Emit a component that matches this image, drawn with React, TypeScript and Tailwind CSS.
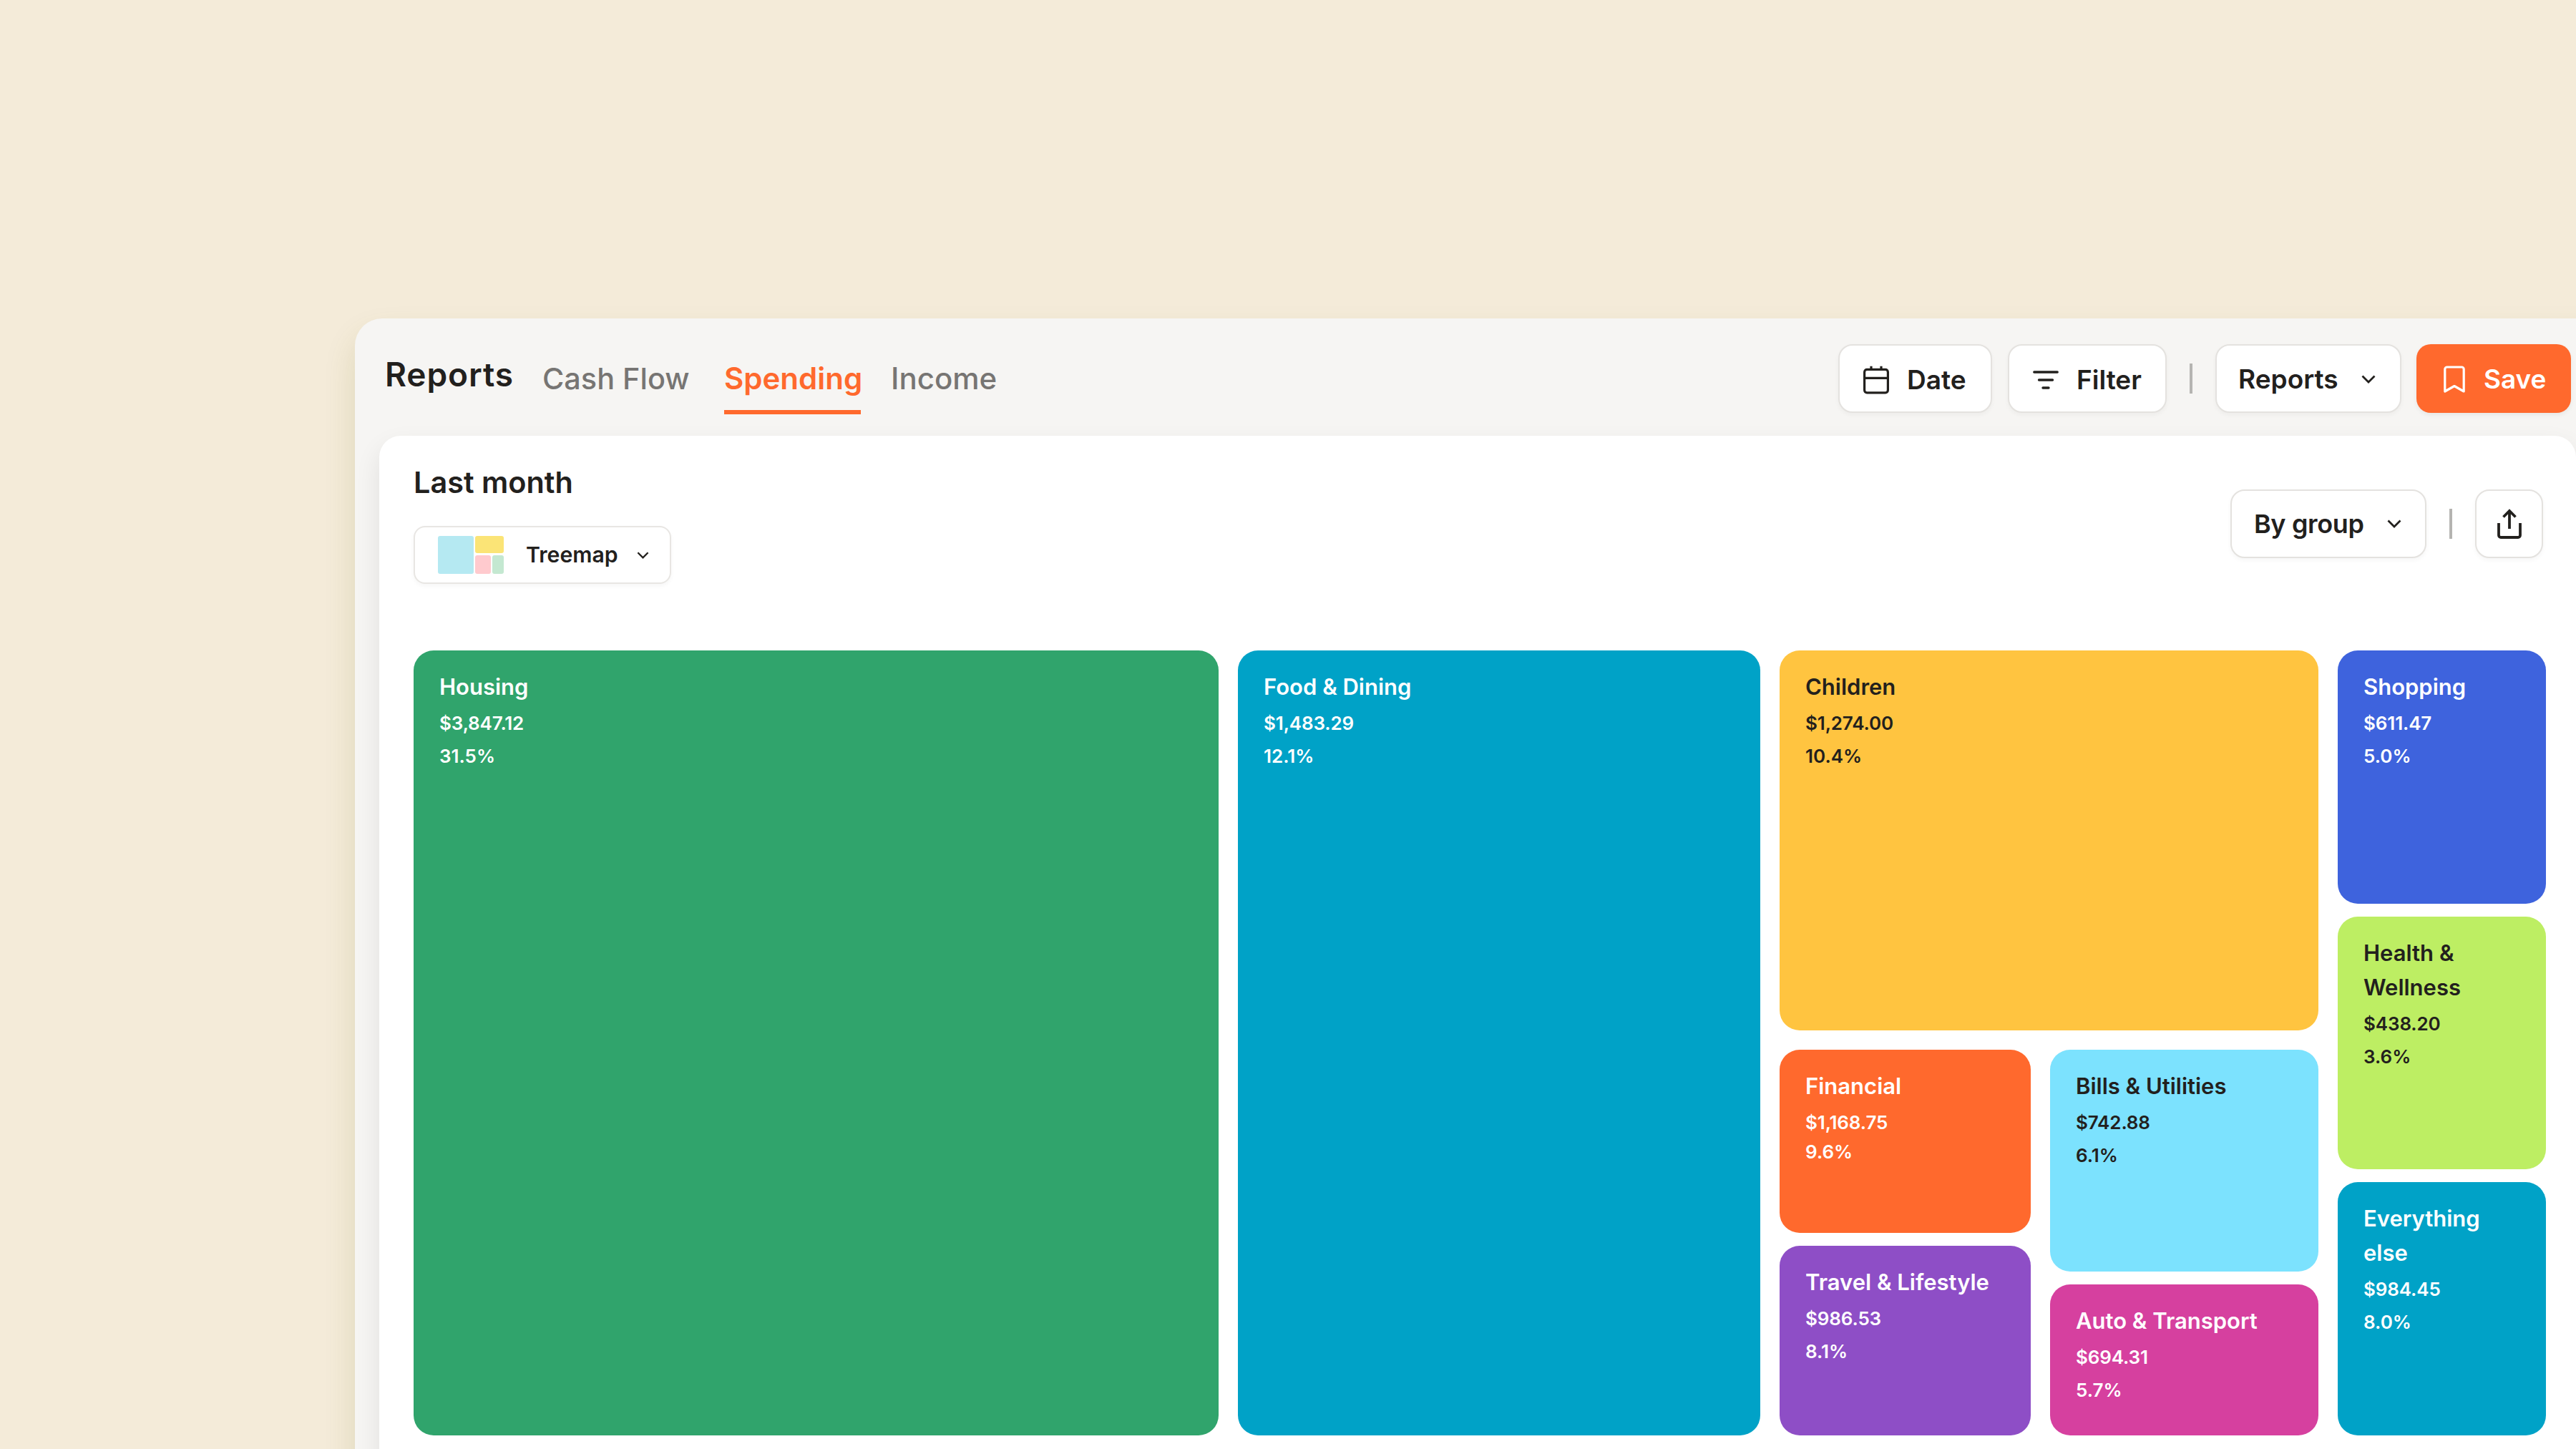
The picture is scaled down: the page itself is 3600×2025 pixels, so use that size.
import { ReactNode } from "react";
import clsx from "clsx";

type Group = {
  name: string;
  amount: string;
  share: string;
  className: string;
  compact?: boolean;
};

const housing: Group = { name: "Housing", amount: "$3,847.12", share: "31.5%", className: "w-[1125px] bg-[#30a46c] text-white" };
const food: Group = { name: "Food & Dining", amount: "$1,483.29", share: "12.1%", className: "w-[730px] bg-[#00a2c7] text-white" };
const children: Group = { name: "Children", amount: "$1,274.00", share: "10.4%", className: "h-[531px] bg-[#ffc440] text-[#22201d]" };
const financial: Group = { name: "Financial", amount: "$1,168.75", share: "9.6%", className: "h-[256px] bg-[#ff692d] text-white", compact: true };
const travel: Group = { name: "Travel & Lifestyle", amount: "$986.53", share: "8.1%", className: "flex-1 bg-[#8e4ec6] text-white" };
const bills: Group = { name: "Bills & Utilities", amount: "$742.88", share: "6.1%", className: "h-[310px] bg-[#7ce2fe] text-[#22201d]" };
const auto: Group = { name: "Auto & Transport", amount: "$694.31", share: "5.7%", className: "flex-1 bg-[#d6409f] text-white" };

const lastColumn: Group[] = [
  { name: "Shopping", amount: "$611.47", share: "5.0%", className: "flex-1 bg-[#3e63dd] text-white" },
  { name: "Health & Wellness", amount: "$438.20", share: "3.6%", className: "flex-1 bg-[#bdee63] text-[#22201d]" },
  { name: "Everything else", amount: "$984.45", share: "8.0%", className: "flex-1 bg-[#00a2c7] text-white" },
];

function Tile({ group }: { group: Group }) {
  return (
    <div className={clsx("rounded-[28px] px-9 pt-[27px]", group.className)}>
      <div className="text-[31px] leading-[48px]">{group.name}</div>
      <div className="mt-1 text-[26px] leading-[46px] tracking-[-0.005em]">{group.amount}</div>
      <div className={clsx("text-[26px]", group.compact ? "leading-[35px]" : "leading-[45px]")}>{group.share}</div>
    </div>
  );
}

function ChevronIcon({ className }: { className?: string }) {
  return (
    <svg viewBox="0 0 20 12" fill="none" stroke="currentColor" strokeWidth="2.8" className={className}>
      <path d="M1.5 1.5 10 10l8.5-8.5" />
    </svg>
  );
}

function CalendarIcon() {
  return (
    <svg viewBox="0 0 36 40" fill="none" stroke="currentColor" strokeWidth="3.2" className="h-10 w-9">
      <rect x="1.6" y="5.4" width="32.8" height="32.4" rx="3.5" />
      <path d="M1.6 17.4h32.8M11 .8v5M25 .8v5" />
    </svg>
  );
}

function FilterIcon() {
  return (
    <svg viewBox="0 0 36 28" fill="none" stroke="currentColor" strokeWidth="3.4" strokeLinecap="round" className="h-7 w-9">
      <path d="M1.8 3h32.4M8.5 14h19M14 25h8" />
    </svg>
  );
}

function BookmarkIcon() {
  return (
    <svg viewBox="0 0 30 38" fill="none" stroke="currentColor" strokeWidth="3.2" strokeLinejoin="round" className="h-[38px] w-[30px]">
      <path d="M1.8 36V5a3 3 0 0 1 3-3h20.4a3 3 0 0 1 3 3v31L15 28.5z" />
    </svg>
  );
}

function ShareIcon() {
  return (
    <svg viewBox="0 0 34 42" fill="none" stroke="currentColor" strokeWidth="3.8" className="h-[42px] w-[34px]">
      <path d="M2 20v17a3 3 0 0 0 3 3h24a3 3 0 0 0 3-3V20M17 28V3M8.5 11.5 17 3l8.5 8.5" />
    </svg>
  );
}

function Button({ className, children }: { className?: string; children: ReactNode }) {
  return (
    <button className={clsx("flex h-24 items-center rounded-[20px] border-2 border-[#e4e2df] bg-white text-[37px] shadow-[0_3px_6px_rgba(0,0,0,0.04)]", className)}>
      {children}
    </button>
  );
}

function Divider({ className }: { className?: string }) {
  return <div className={clsx("h-[42px] w-1 bg-[#b5b4b1]", className)} />;
}

export default function App() {
  return (
    <div className="h-[2025px] w-[3600px] overflow-hidden bg-[#f4ebd9] pt-[445px] pl-[496px] font-['Inter',sans-serif] font-[560] text-[#22201d]">
      <div className="h-[1700px] w-[3160px] rounded-tl-[38px] bg-[#f6f5f3] pl-[34px] shadow-[0_24px_44px_rgba(110,110,20,0.16)]">
        {/* Top bar */}
        <header className="flex h-[164px] items-start pl-2">
          <h1 className="mt-[48px] w-[220px] text-[46px] leading-[60px] tracking-[0.02em]">Reports</h1>
          <nav className="mt-[56px] flex text-[41.4px] leading-[56px] font-medium text-[#777573]">
            <span className="w-[254px]">Cash Flow</span>
            <span className="h-[78px] w-[191px] border-b-[6px] border-[#ff692d] text-[42px] font-[560] text-[#ff692d]">Spending</span>
            <span className="ml-[42px] text-[42px]">Income</span>
          </nav>
          <div className="mt-[36px] ml-auto flex items-center pr-[63px]">
            <Button className="w-[215px] gap-[25px] pt-[3px] pl-[33px]">
              <CalendarIcon />
              Date
            </Button>
            <Button className="ml-[22px] w-[222px] gap-[25px] pt-[3px] pl-[33px]">
              <FilterIcon />
              Filter
            </Button>
            <Divider className="mx-8" />
            <Button className="w-[260px] pt-[2px] pl-[30px]">
              Reports
              <ChevronIcon className="ml-8 h-3 w-5" />
            </Button>
            <button className="ml-[21px] flex h-24 w-[216px] items-center gap-[26px] rounded-[20px] bg-[#ff692d] pt-px pl-[38px] text-[36.9px] text-white shadow-[0_3px_6px_rgba(0,0,0,0.06)]">
              <BookmarkIcon />
              Save
            </button>
          </div>
        </header>

        {/* Report card */}
        <main className="h-[1500px] w-[3070px] rounded-t-[30px] bg-white pl-[48px] shadow-[0_16px_36px_rgba(0,0,0,0.09)]">
          <div className="flex h-[300px]">
            <div className="pt-[37px]">
              <h2 className="text-[41.4px] leading-[56px]">Last month</h2>
              <button className="mt-[33px] flex h-[81px] w-[360px] items-center rounded-[16px] border-2 border-[#e8e6e3] pl-8 text-[30.2px] shadow-[0_3px_6px_rgba(0,0,0,0.04)]">
                <div className="flex h-[53px] w-[92px] gap-[2px]">
                  <div className="w-[50px] rounded-[3px] bg-[#b5e9f2]" />
                  <div className="flex flex-1 flex-col gap-[3px]">
                    <div className="h-6 rounded-[3px] bg-[#fbe476]" />
                    <div className="flex flex-1 gap-[2px]">
                      <div className="w-[22px] rounded-[3px] bg-[#ffcace]" />
                      <div className="flex-1 rounded-[3px] bg-[#c4e8d1]" />
                    </div>
                  </div>
                </div>
                <span className="ml-[31px]">Treemap</span>
                <ChevronIcon className="ml-[26px] h-[10px] w-[17px]" />
              </button>
            </div>
            <div className="mt-[75px] mr-[46px] ml-auto flex h-24 items-center">
              <Button className="w-[274px] pl-[31px]">
                <span className="text-[36px] tracking-[-0.01em]">By group</span>
                <ChevronIcon className="ml-[32px] h-3 w-5" />
              </Button>
              <Divider className="mx-8" />
              <Button className="w-[95px] justify-center">
                <ShareIcon />
              </Button>
            </div>
          </div>

          {/* Treemap */}
          <div className="flex h-[1097px] w-[2980px] gap-[27px]">
            <Tile group={housing} />
            <Tile group={food} />
            <div className="flex w-[753px] flex-col gap-[27px]">
              <Tile group={children} />
              <div className="flex flex-1 gap-[27px]">
                <div className="flex w-[351px] flex-col gap-[18px]">
                  <Tile group={financial} />
                  <Tile group={travel} />
                </div>
                <div className="flex flex-1 flex-col gap-[18px]">
                  <Tile group={bills} />
                  <Tile group={auto} />
                </div>
              </div>
            </div>
            <div className="flex flex-1 flex-col gap-[18px]">
              {lastColumn.map((group) => (
                <Tile key={group.name} group={group} />
              ))}
            </div>
          </div>
        </main>
      </div>
    </div>
  );
}
